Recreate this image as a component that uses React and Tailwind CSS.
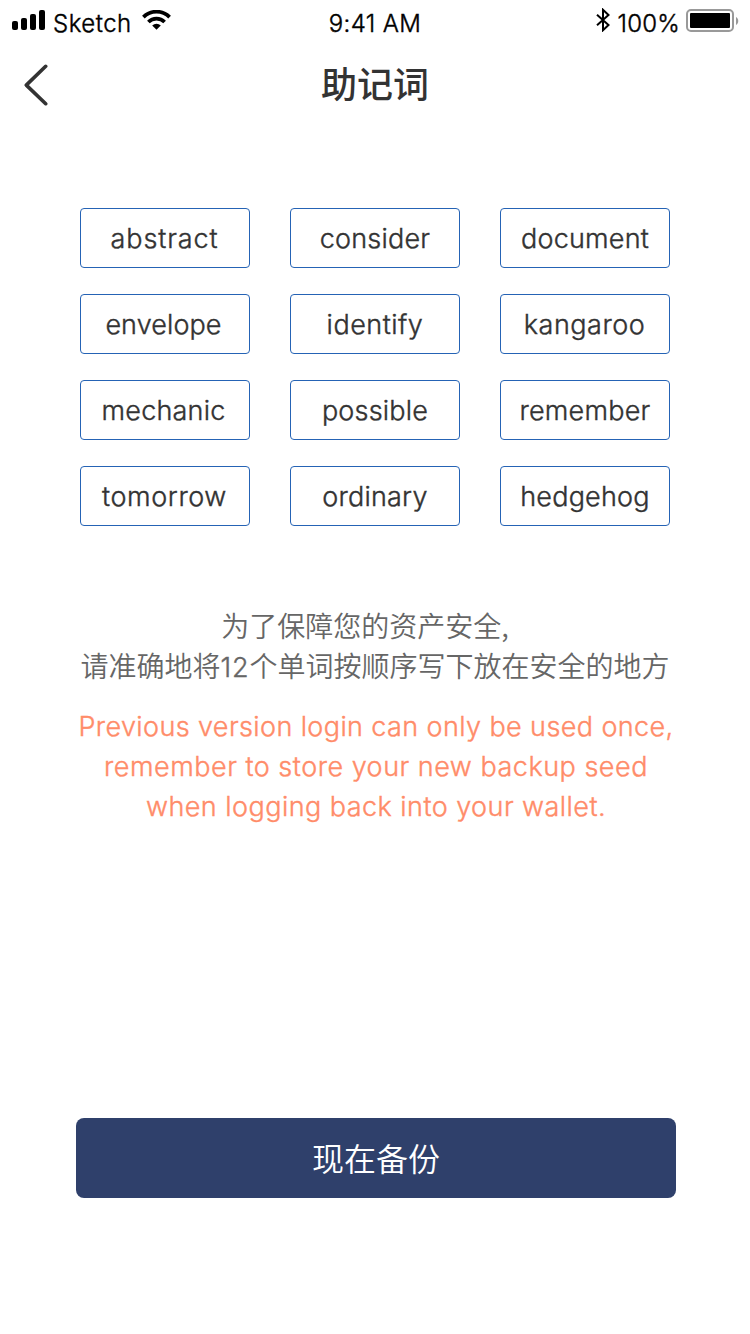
const words = [
  { text: 'abstract', spacing: 'tracking-[0.9px] -ml-px' },
  { text: 'consider', spacing: 'tracking-[0.2px]' },
  { text: 'document', spacing: 'tracking-[0.2px]' },
  { text: 'envelope', spacing: 'tracking-[0.1px] -ml-[3px]' },
  { text: 'identify', spacing: 'tracking-[0.5px]' },
  { text: 'kangaroo', spacing: 'tracking-[0.5px] -ml-px' },
  { text: 'mechanic', spacing: 'tracking-[0.2px] -ml-[3px]' },
  { text: 'possible', spacing: 'tracking-[0.2px]' },
  { text: 'remember', spacing: 'tracking-[0.2px]' },
  { text: 'tomorrow', spacing: 'tracking-[0.6px] -ml-px' },
  { text: 'ordinary', spacing: 'tracking-[0.2px]' },
  { text: 'hedgehog', spacing: 'tracking-[0.2px]' },
];

function StatusBar() {
  return (
    <div className="grid h-10 grid-cols-3 items-center whitespace-nowrap text-[24px] leading-[30px] text-black">
      <div className="flex items-center pl-3">
        <svg className="h-5 w-[33px]" viewBox="0 0 33 20">
          <rect x="0" y="11" width="6" height="9" rx="2" />
          <rect x="9" y="8" width="6" height="12" rx="2" />
          <rect x="18" y="4" width="6" height="16" rx="2" />
          <rect x="27" y="0" width="6" height="20" rx="2" />
        </svg>
        <span className="ml-2 mt-[7px] w-[89px] font-light tracking-[0.5px] [-webkit-text-stroke:0.4px]">Sketch</span>
        <svg className="h-5 w-[29px]" viewBox="0 0 29 20" fill="none" stroke="#000" strokeWidth="3.7">
          <path d="M1.4 7.1a18.4 18.4 0 0 1 26.2 0" />
          <path d="M6.4 12a11.4 11.4 0 0 1 16.2 0" />
          <path d="M10.2 15.6a6.1 6.1 0 0 1 8.6 0L14.5 19.8z" fill="#000" stroke="none" />
        </svg>
      </div>
      <div className="mt-[7px] text-center font-light tracking-[0.4px] [-webkit-text-stroke:0.4px]">9:41 AM</div>
      <div className="flex items-center justify-end pr-[10px]">
        <svg className="mr-[7px] h-6 w-4" viewBox="0 0 16 24" fill="none" stroke="#000" strokeWidth="2">
          <path d="M2 6.7l11.5 10.3-5.5 5.2V1.8l5.5 5.2L2 17.3" />
        </svg>
        <span className="mt-[7px] font-light tracking-[0.2px] [-webkit-text-stroke:0.4px]">100%</span>
        <svg className="ml-1.5 mt-0.5 h-6 w-[54px] shrink-0" viewBox="0 0 54 24">
          <rect x="1" y="1" width="46" height="21" rx="4" fill="none" stroke="#999" strokeWidth="2" />
          <rect x="4" y="4" width="40" height="15" rx="1" />
          <path d="M50 8c3 1.5 3 6.5 0 8z" fill="#999" />
        </svg>
      </div>
    </div>
  );
}

export default function App() {
  return (
    <main className="flex h-[1334px] w-[750px] flex-col bg-white font-['Inter','Noto_Sans_CJK_SC',sans-serif]">
      <StatusBar />
      <header className="grid h-22 grid-cols-[80px_1fr_80px] items-center">
        <svg className="ml-6 mt-0.5 h-[42px] w-6" viewBox="0 0 24 42" fill="none" stroke="#333" strokeWidth="3.6" strokeLinecap="round" strokeLinejoin="round">
          <path d="M21.7 2.3L2.3 21.1l19.4 18.6" />
        </svg>
        <h1 className="mt-0.5 text-center text-[36px] font-medium leading-[50px] text-[#333]">助记词</h1>
      </header>
      <ul className="mx-20 mt-20 grid grid-cols-3 gap-x-10 gap-y-[26px]">
        {words.map((word) => (
          <li key={word.text} className="flex h-[60px] items-center justify-center rounded border border-[#2563b5] pt-0.5 text-[27px] font-light leading-10 text-[#333] [-webkit-text-stroke:0.4px]">
            <span className={word.spacing}>{word.text}</span>
          </li>
        ))}
      </ul>
      <p className="mt-[79px] whitespace-nowrap text-center font-['Noto_Sans_CJK_SC',sans-serif] text-[28px] font-[350] leading-10 text-[#666]">
        为了保障您的资产安全<span className="pr-5">,</span>
        <br />
        请准确地将<span className="font-['Inter'] text-[27px] leading-none tracking-[0.8px] [-webkit-text-stroke:0.4px]">12</span>个单词按顺序写下放在安全的地方
      </p>
      <p className="mt-[22px] whitespace-nowrap pl-0.5 text-center text-[27px] font-light leading-10 text-[#ff8c69] [-webkit-text-stroke:0.4px]">
        <span className="tracking-[0.39px]">Previous version login can only be used once,</span>
        <br />
        <span className="tracking-[0.5px]">remember to store your new backup seed</span>
        <br />
        <span className="tracking-[0.45px]">when logging back into your wallet.</span>
      </p>
      <button className="ml-[76px] mt-[291px] h-20 w-[600px] rounded-lg bg-[#2f406b] pt-1 text-[32px] font-[350] leading-[44px] text-white">
        现在备份
      </button>
    </main>
  );
}
